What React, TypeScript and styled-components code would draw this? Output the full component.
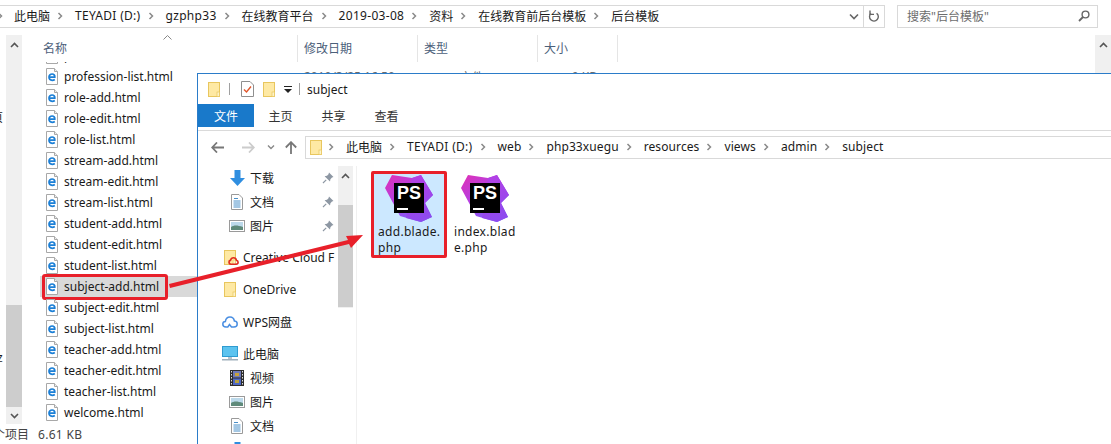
import React from "react";
import styled, { createGlobalStyle } from "styled-components";

const GlobalStyle = createGlobalStyle`
  html, body {
    margin: 0;
    padding: 0;
    background: #fff;
  }
  body {
    font-family: "Noto Sans", "Noto Sans CJK SC", sans-serif;
    font-size: 12px;
    color: #1a1a1a;
  }
`;

const backCrumbs = ["此电脑", "TEYADI (D:)", "gzphp33", "在线教育平台", "2019-03-08", "资料", "在线教育前后台模板", "后台模板"];
const frontCrumbs = ["此电脑", "TEYADI (D:)", "web", "php33xuegu", "resources", "views", "admin", "subject"];
const files = [
  "profession-list.html",
  "role-add.html",
  "role-edit.html",
  "role-list.html",
  "stream-add.html",
  "stream-edit.html",
  "stream-list.html",
  "student-add.html",
  "student-edit.html",
  "student-list.html",
  "subject-add.html",
  "subject-edit.html",
  "subject-list.html",
  "teacher-add.html",
  "teacher-edit.html",
  "teacher-list.html",
  "welcome.html",
];

// the installed font runs a bit narrower than the one in the picture
const crumbSpacing = (crumb: string) => {
  if (/^(TEYADI|gz|\d)/.test(crumb)) return 0.3;
  if (/^[a-z]/.test(crumb)) return 0.1;
  return 0;
};

function Chevron() {
  return (
    <ChevronSvg width="6" height="8" viewBox="0 0 6 8">
      <path d="M1.5 1 L4.5 4 L1.5 7" fill="none" stroke="#8a8a8a" strokeWidth="1.5" />
    </ChevronSvg>
  );
}

function Crumbs({ items }: { items: string[] }) {
  return (
    <>
      {items.map((crumb) => (
        <React.Fragment key={crumb}>
          <Chevron />
          <Crumb $spacing={crumbSpacing(crumb)}>{crumb}</Crumb>
        </React.Fragment>
      ))}
    </>
  );
}

function Folder() {
  return (
    <svg width="12" height="15" viewBox="0 0 12 15">
      <rect x="0.5" y="0.5" width="11" height="14" fill="#fee9a4" stroke="#e8c65e" />
      <rect x="9" y="10" width="2.5" height="4.5" fill="#fdf3c8" stroke="#e8c65e" strokeWidth="0.7" />
    </svg>
  );
}

function HtmlFileIcon() {
  return (
    <svg width="14" height="17" viewBox="0 0 14 17">
      <path d="M1.5 0.5 H9.5 L12.5 3.5 V16.5 H1.5 Z" fill="#fff" stroke="#a8a8a8" />
      <path d="M9.5 0.5 V3.5 H12.5" fill="#eee" stroke="#a8a8a8" />
      <path
        d="M4.4 9.2 H9.8 C10 7.2 8.7 6 7.1 6 C5.4 6 4 7.3 4 9.1 C4 11 5.4 12.3 7.2 12.3 C8.2 12.3 9.1 12 9.8 11.5"
        fill="none"
        stroke="#1b7fd6"
        strokeWidth="1.7"
      />
    </svg>
  );
}

function PinIcon() {
  return (
    <svg width="12" height="12" viewBox="0 0 12 12">
      <path d="M7 0.5 L11.5 5 L10 5.6 L8.4 7.2 L8 9.6 L2.6 4.2 L5 3.8 L6.5 2.2 Z" fill="#8d97a3" />
      <path d="M4.2 7.8 L1 11" stroke="#8d97a3" strokeWidth="1.2" />
    </svg>
  );
}

function DownloadIcon() {
  return (
    <svg width="15" height="16" viewBox="0 0 15 16">
      <path d="M4.5 0 H10.5 V8 H15 L7.5 16 L0 8 H4.5 Z" fill="#2f8ee0" />
    </svg>
  );
}

function DocIcon() {
  return (
    <svg width="12" height="16" viewBox="0 0 12 16">
      <path d="M0.5 0.5 H8 L11.5 4 V15.5 H0.5 Z" fill="#fff" stroke="#9a9a9a" />
      <path d="M3 4.5 H7 M2.5 7 H9.5 M2.5 9 H9.5 M2.5 11 H9.5 M2.5 13 H9.5" stroke="#4a90c8" />
    </svg>
  );
}

function PictureIcon() {
  return (
    <svg width="16" height="12" viewBox="0 0 16 12">
      <rect x="0.5" y="0.5" width="15" height="11" fill="#fff" stroke="#9a9a9a" />
      <rect x="2" y="2" width="12" height="8" fill="#bcd9ea" />
      <path d="M2 7 C5 5 8 5 14 7 V10 H2 Z" fill="#5f8a7a" />
    </svg>
  );
}

function FilmIcon() {
  return (
    <svg width="14" height="16" viewBox="0 0 14 16">
      <rect width="14" height="16" fill="#2c2c2c" />
      <rect x="3" y="1" width="8" height="6.5" fill="#6f79b8" />
      <rect x="3" y="8.5" width="8" height="6.5" fill="#4e68c4" />
      <rect x="5" y="3" width="4" height="3" fill="#c8a33a" />
      <rect x="5" y="10" width="4" height="3" fill="#b8a040" />
      <path d="M1.5 1 V15 M12.5 1 V15" stroke="#ddd" strokeWidth="1" strokeDasharray="1.5 1.5" />
    </svg>
  );
}

function CloudIcon() {
  return (
    <svg width="16" height="12" viewBox="0 0 16 12">
      <path
        d="M4 11 C1.8 11 0.8 9.6 0.8 8 C0.8 6.4 2 5.4 3.4 5.4 C3.8 2.8 5.6 1 8 1 C10.4 1 12 2.8 12.4 5 C14 5 15.2 6.4 15.2 8 C15.2 9.8 14 11 12 11 H9.5 L7.5 8.5 L5.8 11 Z"
        fill="none"
        stroke="#4b8fe2"
        strokeWidth="1.5"
      />
    </svg>
  );
}

function MonitorIcon() {
  return (
    <svg width="16" height="15" viewBox="0 0 16 15">
      <rect x="0.5" y="0.5" width="15" height="10" fill="#5cc3ef" stroke="#2f9bd0" />
      <rect x="6" y="11" width="4" height="2" fill="#b9c4cc" />
      <rect x="0" y="13" width="16" height="1.5" fill="#9fb0bc" />
    </svg>
  );
}

function PhpStormLogo() {
  return (
    <LogoSvg width="50" height="50" viewBox="0 0 50 50">
      <defs>
        <linearGradient id="psLeft" x1="0" y1="0" x2="0.8" y2="1">
          <stop offset="0" stopColor="#e22fb4" />
          <stop offset="0.55" stopColor="#a845ee" />
          <stop offset="1" stopColor="#6a6cf5" />
        </linearGradient>
        <linearGradient id="psRight" x1="0" y1="0" x2="0.3" y2="1">
          <stop offset="0" stopColor="#b83fe4" />
          <stop offset="1" stopColor="#8f4aee" />
        </linearGradient>
      </defs>
      <path d="M1 15 L8 2 L28 5 L37 2 L49 22 L41 30 L48 44 L37 49 L16 43 Z" fill="url(#psLeft)" />
      <path d="M28 5 L37 2 L49 22 L41 30 L48 44 L37 49 L22 45 Z" fill="url(#psRight)" />
      <rect x="10" y="10" width="30" height="30" fill="#000" />
      <text x="13" y="26" fontFamily="Liberation Sans" fontWeight="700" fontSize="18" fill="#fff">
        PS
      </text>
      <rect x="13" y="35" width="11" height="2" fill="#fff" />
    </LogoSvg>
  );
}

function App() {
  return (
    <Desktop>
      <GlobalStyle />

      <BackWindow>
        <TopRow>
          <BackAddress>
            <BackCrumbs>
              <Crumbs items={backCrumbs} />
            </BackCrumbs>
            <DropCell>
              <svg width="10" height="7" viewBox="0 0 10 7">
                <path d="M1 1.5 L5 5.5 L9 1.5" fill="none" stroke="#666" strokeWidth="1.6" />
              </svg>
            </DropCell>
            <RefreshCell>
              <svg width="12" height="13" viewBox="0 0 12 13">
                <path d="M8.6 3.2 A4.4 4.4 0 1 1 3 3.4" fill="none" stroke="#666" strokeWidth="1.4" />
                <path d="M2 0.5 V4.4 H6" fill="none" stroke="#666" strokeWidth="1.4" />
              </svg>
            </RefreshCell>
          </BackAddress>
          <SearchBox>
            <span>搜索"后台模板"</span>
            <svg width="12" height="12" viewBox="0 0 12 12">
              <circle cx="7.5" cy="4.5" r="3.4" fill="none" stroke="#666" strokeWidth="1.4" />
              <path d="M5 7 L1 11" stroke="#666" strokeWidth="1.8" />
            </svg>
          </SearchBox>
        </TopRow>

        <BackBody>
          <CutStrip>
            <CutHan>页</CutHan>
            <CutLatin>z</CutLatin>
          </CutStrip>
          <NavScroll>
            <ScrollUp>
              <svg width="9" height="6" viewBox="0 0 9 6">
                <path d="M1 5 L4.5 1.5 L8 5" fill="none" stroke="#555" strokeWidth="1.6" />
              </svg>
            </ScrollUp>
            <NavThumb />
            <ScrollDown>
              <svg width="9" height="6" viewBox="0 0 9 6">
                <path d="M1 1 L4.5 4.5 L8 1" fill="none" stroke="#555" strokeWidth="1.6" />
              </svg>
            </ScrollDown>
          </NavScroll>

          <FilePane>
            <ColumnHeader>
              <ColumnName>
                名称
                <SortArrow width="9" height="5" viewBox="0 0 9 5">
                  <path d="M0.5 4.5 L4.5 0.5 L8.5 4.5" fill="none" stroke="#888" />
                </SortArrow>
              </ColumnName>
              <ColumnCell $width={120}>修改日期</ColumnCell>
              <ColumnCell $width={120}>类型</ColumnCell>
              <ColumnCell $width={80}>大小</ColumnCell>
              <ColumnEnd />
            </ColumnHeader>
            <FileList>
              <FileRow $clipped>
                <HtmlFileIcon />
                <FileName>profession-edit.html</FileName>
              </FileRow>
              {files.map((file, index) => (
                <FileRow key={file} $selected={file === "subject-add.html"}>
                  <HtmlFileIcon />
                  <FileName>{file}</FileName>
                  {index === 0 && (
                    <>
                      <FileMeta $width={120}>2019/3/25 16:50</FileMeta>
                      <FileMeta $width={120}>HTML 文件</FileMeta>
                      <FileSize>9 KB</FileSize>
                    </>
                  )}
                  {file === "subject-add.html" && <RowHighlight />}
                </FileRow>
              ))}
            </FileList>
          </FilePane>

          <RightScroll>
            <svg width="9" height="6" viewBox="0 0 9 6">
              <path d="M1 5 L4.5 1.5 L8 5" fill="none" stroke="#555" strokeWidth="1.6" />
            </svg>
          </RightScroll>
        </BackBody>

        <StatusBar>
          <StatusCount>个项目</StatusCount>
          <StatusSize>6.61 KB</StatusSize>
        </StatusBar>
      </BackWindow>

      <FrontWindow>
        <TitleBar>
          <Folder />
          <TitleSep $before={9} $after={11} />
          <svg width="13" height="16" viewBox="0 0 13 16">
            <path d="M0.5 0.5 H9 L12.5 4 V15.5 H0.5 Z" fill="#fff" stroke="#8f8f8f" />
            <path d="M3 8.5 L5.5 11 L10 5.5" fill="none" stroke="#e0552a" strokeWidth="1.4" />
          </svg>
          <TitleFolder>
            <Folder />
          </TitleFolder>
          <QuickDrop>
            <svg width="8" height="7" viewBox="0 0 8 7">
              <path d="M0 0 H8 V1 H0 Z M0 3 H8 L4 7 Z" fill="#222" />
            </svg>
          </QuickDrop>
          <TitleSep $before={7} $after={7} />
          <span>subject</span>
        </TitleBar>

        <RibbonTabs>
          <FileTab>文件</FileTab>
          <RibbonTab>主页</RibbonTab>
          <RibbonTab>共享</RibbonTab>
          <RibbonTab>查看</RibbonTab>
        </RibbonTabs>

        <AddressRow>
          <NavButtons>
            <svg width="13" height="11" viewBox="0 0 13 11">
              <path d="M6 0.5 L1.2 5.5 L6 10.5 M1.5 5.5 H13" fill="none" stroke="#777" strokeWidth="1.8" />
            </svg>
            <svg width="13" height="11" viewBox="0 0 13 11">
              <path d="M7 0.5 L11.8 5.5 L7 10.5 M11.5 5.5 H0" fill="none" stroke="#ccc" strokeWidth="1.8" />
            </svg>
            <svg width="8" height="5" viewBox="0 0 8 5">
              <path d="M1 0.5 L4 3.5 L7 0.5" fill="none" stroke="#888" strokeWidth="1.4" />
            </svg>
            <svg width="12" height="13" viewBox="0 0 12 13">
              <path d="M0.8 6.5 L6 1.2 L11.2 6.5 M6 1.5 V13" fill="none" stroke="#777" strokeWidth="1.8" />
            </svg>
          </NavButtons>
          <FrontAddress>
            <Folder />
            <Crumbs items={frontCrumbs} />
          </FrontAddress>
        </AddressRow>

        <FrontBody>
          <NavPane>
            <NavRow $depth={1}>
              <NavIcon><DownloadIcon /></NavIcon>
              <NavLabel>下载</NavLabel>
              <PinSlot><PinIcon /></PinSlot>
            </NavRow>
            <NavRow $depth={1}>
              <NavIcon><DocIcon /></NavIcon>
              <NavLabel>文档</NavLabel>
              <PinSlot><PinIcon /></PinSlot>
            </NavRow>
            <NavRow $depth={1}>
              <NavIcon><PictureIcon /></NavIcon>
              <NavLabel>图片</NavLabel>
              <PinSlot><PinIcon /></PinSlot>
            </NavRow>
            <NavRow $depth={0} $gap>
              <NavIcon>
                <FolderBadge>
                  <Folder />
                  <BadgeSvg width="11" height="8" viewBox="0 0 10 8">
                    <path
                      d="M2.5 7.2 C1 7.2 0.5 6 0.5 5 C0.5 4 1.3 3.4 2 3.4 C2.4 1.8 3.6 0.8 5 0.8 C6.6 0.8 7.7 2 8 3.4 C9 3.6 9.6 4.3 9.6 5.3 C9.6 6.4 8.8 7.2 7.6 7.2 Z"
                      fill="none"
                      stroke="#e02b20"
                      strokeWidth="1.6"
                    />
                  </BadgeSvg>
                </FolderBadge>
              </NavIcon>
              <NavLabel>Creative Cloud F</NavLabel>
            </NavRow>
            <NavRow $depth={0} $gap>
              <NavIcon><Folder /></NavIcon>
              <NavLabel>OneDrive</NavLabel>
            </NavRow>
            <NavRow $depth={0} $gap>
              <NavIcon><CloudIcon /></NavIcon>
              <NavLabel>WPS网盘</NavLabel>
            </NavRow>
            <NavRow $depth={0} $gap>
              <NavIcon><MonitorIcon /></NavIcon>
              <NavLabel>此电脑</NavLabel>
            </NavRow>
            <NavRow $depth={1}>
              <NavIcon><FilmIcon /></NavIcon>
              <NavLabel>视频</NavLabel>
            </NavRow>
            <NavRow $depth={1}>
              <NavIcon><PictureIcon /></NavIcon>
              <NavLabel>图片</NavLabel>
            </NavRow>
            <NavRow $depth={1}>
              <NavIcon><DocIcon /></NavIcon>
              <NavLabel>文档</NavLabel>
            </NavRow>
            <NavRow $depth={1}>
              <NavIcon><DownloadIcon /></NavIcon>
            </NavRow>
          </NavPane>

          <PaneScroll>
            <ScrollUp>
              <svg width="9" height="6" viewBox="0 0 9 6">
                <path d="M1 5 L4.5 1.5 L8 5" fill="none" stroke="#555" strokeWidth="1.6" />
              </svg>
            </ScrollUp>
            <PaneThumb />
          </PaneScroll>

          <IconGrid>
            <IconItem $selected>
              <PhpStormLogo />
              <IconName>
                add.blade.
                <br />
                php
              </IconName>
            </IconItem>
            <IconItem>
              <PhpStormLogo />
              <IconName>
                index.blad
                <br />
                e.php
              </IconName>
            </IconItem>
          </IconGrid>
        </FrontBody>
      </FrontWindow>

      <ArrowOverlay width="1111" height="444" viewBox="0 0 1111 444">
        <path d="M170 288 L349 244 L351 248 L363 235 L346 236 L348 240 L169 284 Z" fill="#e8202a" />
      </ArrowOverlay>
    </Desktop>
  );
}

const Desktop = styled.div`
  position: relative;
  width: 1111px;
  height: 444px;
  overflow: hidden;
  background: #fff;
`;

const ChevronSvg = styled.svg`
  flex: none;
  margin: 0 12px 0 7px;
`;

const Crumb = styled.span<{ $spacing: number }>`
  letter-spacing: ${(p) => p.$spacing}px;
`;

const BackWindow = styled.div`
  display: flex;
  flex-direction: column;
  height: 100%;
`;

const TopRow = styled.div`
  display: flex;
  padding: 5px 13px 0 0;
  gap: 12px;
`;

const BackAddress = styled.div`
  display: flex;
  align-items: stretch;
  width: 885px;
  height: 23px;
  box-sizing: border-box;
  border: 1px solid #d9d9d9;
  border-left: 0;
`;

const BackCrumbs = styled.div`
  flex: 1;
  display: flex;
  align-items: center;
  overflow: hidden;
  white-space: nowrap;
  padding-bottom: 2px;

  svg:first-child {
    margin-left: -3px;
    margin-right: 11px;
  }
`;

const DropCell = styled.div`
  width: 18px;
  display: flex;
  align-items: center;
  justify-content: center;
`;

const RefreshCell = styled.div`
  width: 20px;
  display: flex;
  align-items: center;
  justify-content: center;
  border-left: 1px solid #d9d9d9;
`;

const SearchBox = styled.div`
  flex: 1;
  display: flex;
  align-items: center;
  justify-content: space-between;
  height: 23px;
  box-sizing: border-box;
  border: 1px solid #d9d9d9;
  padding: 0 7px 2px 9px;
  color: #6d6d6d;
`;

const BackBody = styled.div`
  flex: 1;
  display: flex;
  margin-top: 7px;
  min-height: 0;
`;

const CutStrip = styled.div`
  width: 6px;
  overflow: hidden;
  flex: none;
`;

const CutHan = styled.div`
  margin: 75px 0 0 -9px;
  line-height: 16px;
`;

const CutLatin = styled.div`
  margin: 224px 0 0 -3px;
  line-height: 16px;
`;

const NavScroll = styled.div`
  width: 16px;
  flex: none;
  background: #f0f0f0;
  display: flex;
  flex-direction: column;
`;

const ScrollUp = styled.div`
  height: 20px;
  display: flex;
  align-items: center;
  justify-content: center;
  flex: none;
`;

const ScrollDown = styled(ScrollUp)`
  height: 17px;
`;

const NavThumb = styled.div`
  margin-top: auto;
  height: 102px;
  background: #cdcdcd;
`;

const FilePane = styled.div`
  flex: 1;
  margin-left: 18px;
  display: flex;
  flex-direction: column;
  min-width: 0;
`;

const ColumnHeader = styled.div`
  display: flex;
  height: 27px;
  flex: none;
  color: #4c607a;
`;

const ColumnCell = styled.div<{ $width: number }>`
  width: ${(p) => p.$width}px;
  box-sizing: border-box;
  border-left: 1px solid #e5e5e5;
  padding: 6px 0 0 6px;
  line-height: 16px;
`;

const ColumnName = styled.div`
  position: relative;
  width: 257px;
  padding: 6px 0 0 3px;
  box-sizing: border-box;
  line-height: 16px;
`;

const SortArrow = styled.svg`
  position: absolute;
  left: 123px;
  top: 0;
`;

const ColumnEnd = styled.div`
  width: 1px;
  background: #e5e5e5;
`;

const FileList = styled.div`
  flex: 1;
  overflow: hidden;
  min-height: 0;
`;

const FileRow = styled.div<{ $selected?: boolean; $clipped?: boolean }>`
  position: relative;
  display: flex;
  align-items: center;
  height: 21px;
  padding-left: 5px;
  margin-top: ${(p) => (p.$clipped ? "-17px" : "0")};
  background: ${(p) => (p.$selected ? "#d9d9d9" : "transparent")};
  white-space: nowrap;
`;

const FileName = styled.span`
  margin-left: 5px;
  width: 233px;
  flex: none;
`;

const FileMeta = styled.span<{ $width: number }>`
  width: ${(p) => p.$width}px;
  flex: none;
  color: #6d6d6d;
  padding-left: 7px;
  box-sizing: border-box;
`;

const FileSize = styled.span`
  width: 60px;
  flex: none;
  color: #6d6d6d;
  text-align: right;
`;

const RowHighlight = styled.div`
  position: absolute;
  left: 2px;
  top: -2px;
  width: 126px;
  height: 26px;
  box-sizing: border-box;
  border: 3px solid #e8202a;
  border-radius: 3px;
`;

const RightScroll = styled.div`
  position: absolute;
  right: 0;
  top: 35px;
  width: 16px;
  height: 38px;
  background: #f0f0f0;
  display: flex;
  justify-content: center;
  padding-top: 7px;
  box-sizing: border-box;
`;

const StatusBar = styled.div`
  flex: none;
  height: 20px;
  display: flex;
  align-items: center;
  gap: 9px;
  color: #444;
  box-sizing: border-box;
`;

const StatusCount = styled.span`
  margin-left: -7px;
`;

const StatusSize = styled.span`
  letter-spacing: 0.3px;
`;

const FrontWindow = styled.div`
  position: absolute;
  left: 197px;
  top: 73px;
  width: 914px;
  height: 371px;
  box-sizing: border-box;
  border-top: 1px solid #2b7cc9;
  border-left: 1px solid #2b7cc9;
  background: #fff;
  display: flex;
  flex-direction: column;
`;

const TitleBar = styled.div`
  display: flex;
  align-items: center;
  height: 30px;
  flex: none;
  padding-left: 10px;
`;

const TitleSep = styled.div<{ $before: number; $after: number }>`
  width: 1px;
  height: 12px;
  background: #a0a0a0;
  margin: 0 ${(p) => p.$after}px 0 ${(p) => p.$before}px;
`;

const TitleFolder = styled.div`
  display: flex;
  margin-left: 9px;
`;

const QuickDrop = styled.div`
  display: flex;
  margin-left: 9px;
`;

const RibbonTabs = styled.div`
  display: flex;
  height: 27px;
  flex: none;
  align-items: flex-start;
  border-bottom: 1px solid #dadada;
  box-sizing: border-box;
`;

const FileTab = styled.div`
  width: 56px;
  height: 23px;
  background: #1979ca;
  color: #fff;
  display: flex;
  align-items: center;
  justify-content: center;
`;

const RibbonTab = styled.div`
  width: 53px;
  height: 23px;
  color: #333;
  display: flex;
  align-items: center;
  justify-content: center;
`;

const AddressRow = styled.div`
  display: flex;
  flex: none;
  height: 23px;
  margin-top: 5px;
`;

const NavButtons = styled.div`
  width: 107px;
  flex: none;
  display: flex;
  align-items: center;
  padding-left: 13px;
  box-sizing: border-box;

  svg:nth-child(2) {
    margin-left: 18px;
  }
  svg:nth-child(3) {
    margin-left: 12px;
  }
  svg:nth-child(4) {
    margin-left: 10px;
  }
`;

const FrontAddress = styled.div`
  flex: 1;
  display: flex;
  align-items: center;
  border: 1px solid #d9d9d9;
  border-right: 0;
  padding: 0 0 2px 4px;
  white-space: nowrap;
  box-sizing: border-box;

  & > svg:first-child {
    margin-bottom: -2px;
  }
  & > svg:nth-child(2) {
    margin-left: 6px;
  }
`;

const FrontBody = styled.div`
  flex: 1;
  display: flex;
  min-height: 0;
  margin-top: 7px;
`;

const NavPane = styled.div`
  width: 140px;
  flex: none;
  overflow: hidden;
`;

const NavRow = styled.div<{ $depth: number; $gap?: boolean }>`
  display: flex;
  align-items: center;
  height: 24px;
  flex: none;
  margin-top: ${(p) => (p.$gap ? "8px" : "0")};
  padding-left: ${(p) => (p.$depth ? 31 : 24)}px;
  padding-bottom: 1px;
  box-sizing: border-box;
  white-space: nowrap;
`;

const NavIcon = styled.div`
  width: 16px;
  display: flex;
  justify-content: center;
  flex: none;
`;

const NavLabel = styled.span`
  margin-left: 5px;
`;

const PinSlot = styled.div`
  display: flex;
  margin-left: auto;
  margin-right: 4px;
`;

const FolderBadge = styled.div`
  position: relative;
  display: flex;
`;

const BadgeSvg = styled.svg`
  position: absolute;
  left: 4px;
  bottom: 0;
`;

const PaneScroll = styled.div`
  width: 15px;
  flex: none;
  background: #f0f0f0;
  height: 142px;
`;

const PaneThumb = styled.div`
  height: 102px;
  margin-top: 19px;
  background: #cdcdcd;
`;

const IconGrid = styled.div`
  flex: 1;
  display: flex;
  align-items: flex-start;
  padding: 5px 0 0 14px;
  margin-left: 3px;
  border-left: 1px solid #f0f0f0;
`;

const IconItem = styled.div<{ $selected?: boolean }>`
  width: 76px;
  height: 87px;
  box-sizing: border-box;
  border: 3px solid ${(p) => (p.$selected ? "#e8202a" : "transparent")};
  border-radius: 2px;
  background: ${(p) => (p.$selected ? "#cce8ff" : "transparent")};
  display: flex;
  flex-direction: column;
  align-items: center;
`;

const LogoSvg = styled.svg`
  flex: none;
  margin-top: -1px;
`;

const IconName = styled.div`
  align-self: flex-start;
  margin: 1px 0 0 4px;
  line-height: 16px;
  letter-spacing: 0.3px;
  white-space: nowrap;
`;

const ArrowOverlay = styled.svg`
  position: absolute;
  left: 0;
  top: 0;
  pointer-events: none;
`;

export default App;
